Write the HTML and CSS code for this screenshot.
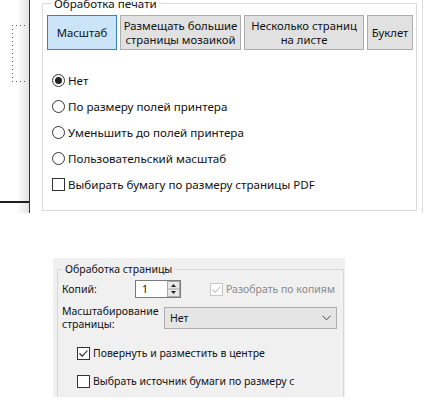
FILE: index.html
```html
<!DOCTYPE html>
<html>
<head>
<meta charset="utf-8">
<link rel="stylesheet" href="styles.css">
</head>
<body>
<div class="top">
  <div class="side">
    <div class="tree"></div>
    <div class="side-rule"></div>
  </div>
  <div class="main">
    <fieldset class="group">
      <legend class="group-title">Обработка печати</legend>
      <div class="tabs">
        <div class="tab tab-active w70">Масштаб</div>
        <div class="tab w121">Размещать большие<br>страницы мозаикой</div>
        <div class="tab w120">Несколько страниц<br>на листе</div>
        <div class="tab w46">Буклет</div>
      </div>
      <div class="options">
        <div class="opt"><span class="radio on"></span>Нет</div>
        <div class="opt"><span class="radio"></span>По размеру полей принтера</div>
        <div class="opt"><span class="radio"></span>Уменьшить до полей принтера</div>
        <div class="opt"><span class="radio"></span>Пользовательский масштаб</div>
        <div class="opt"><span class="check"></span>Выбирать бумагу по размеру страницы PDF</div>
      </div>
    </fieldset>
  </div>
</div>
<div class="bottom">
  <div class="panel">
    <fieldset class="pgroup">
      <legend class="pgroup-title">Обработка страницы</legend>
      <div class="row copies">
        <span class="lbl">Копий:</span>
        <div class="spin">
          <span class="spin-val">1</span>
          <svg class="spin-btns" width="13" height="16" viewBox="0 0 13 16"><rect x="0.5" y="0.5" width="12" height="15" fill="#e8e8e8" stroke="#a9a9a9"/><line x1="1" y1="8" x2="12" y2="8" stroke="#a9a9a9"/><path d="M4 6 L6.5 3 L9 6 Z" fill="#222"/><path d="M4 10 L6.5 13 L9 10 Z" fill="#222"/></svg>
        </div>
        <span class="collate"><span class="check dis"><svg width="11" height="11" viewBox="0 0 11 11"><path d="M1.5 5.5 L4.2 8.2 L9.5 2.5" fill="none" stroke="#c4c4c4" stroke-width="1.1"/></svg></span>Разобрать по копиям</span>
      </div>
      <div class="row scale">
        <span class="lbl two">Масштабирование<br>страницы:</span>
        <div class="select"><span>Нет</span><svg width="9" height="6" viewBox="0 0 9 6"><path d="M0.5 0.8 L4.5 4.8 L8.5 0.8" fill="none" stroke="#444" stroke-width="1"/></svg></div>
      </div>
      <div class="prow first"><span class="check"><svg width="11" height="11" viewBox="0 0 11 11"><path d="M1.5 5.5 L4.2 8.2 L9.5 2.5" fill="none" stroke="#222" stroke-width="1.1"/></svg></span>Повернуть и разместить в центре</div>
      <div class="prow"><span class="check"></span>Выбрать источник бумаги по размеру с</div>
    </fieldset>
  </div>
</div>
</body>
</html>
```

FILE: styles.css
```css
* { box-sizing: border-box; }
html, body {
  margin: 0;
  padding: 0;
  background: #ffffff;
  width: 425px;
  height: 408px;
  overflow: hidden;
  font-family: "Noto Sans", sans-serif;
  font-size: 10.5px;
  color: #111;
}
.top {
  display: flex;
  height: 213px;
  font-size: 11.6px;
}
.side {
  width: 30px;
  height: 213px;
  flex: none;
  background: linear-gradient(to right, #ffffff 0, #ffffff 17px, #e2e2e2 29px);
  border-right: 1px solid #333;
  padding-top: 25px;
  padding-left: 12px;
}
.tree {
  width: 16px;
  height: 57px;
  background:
    linear-gradient(to bottom, #555 1px, transparent 1px) left top / 1px 4px repeat-y,
    linear-gradient(to right, #555 1px, transparent 1px) left top / 4px 1px repeat-x,
    linear-gradient(to right, #555 1px, transparent 1px) left bottom / 4px 1px repeat-x;
}
.side-rule {
  margin: 119px 0 0 -12px;
  width: 29px;
  height: 2px;
  background: #1e1e1e;
}
.main {
  width: 393px;
  height: 213px;
  flex: none;
  border-right: 1px solid #dcdcdc;
  padding-left: 12px;
}
.group {
  margin: -3px 0 0 0;
  padding: 0 3px 0 4px;
  width: 375px;
  height: 214px;
  border: 1px solid #dcdcdc;
}
.group-title {
  padding: 0 2px;
  margin-left: 5px;
  line-height: 13px;
}
.tabs {
  display: flex;
  gap: 3px;
  margin-top: 5px;
  font-size: 11.3px;
}
.tab {
  height: 35px;
  border: 1px solid #adadad;
  background: #e1e1e1;
  display: flex;
  align-items: center;
  justify-content: center;
  text-align: center;
  line-height: 14px;
  white-space: nowrap;
}
.tab-active {
  background: #cce4f7;
  border-color: #3a7fbf;
}
.w70 { width: 70px; }
.w121 { width: 121px; }
.w120 { width: 120px; }
.w46 { width: 46px; }
.options {
  margin-top: 17px;
  padding-left: 5px;
}
.opt {
  height: 26px;
  display: flex;
  align-items: center;
  white-space: nowrap;
}
.radio {
  width: 13px;
  height: 13px;
  flex: none;
  border: 1px solid #333;
  border-radius: 50%;
  margin-right: 3px;
  display: flex;
  align-items: center;
  justify-content: center;
  background: #fff;
}
.radio.on::after {
  content: "";
  width: 7px;
  height: 7px;
  border-radius: 50%;
  background: #222;
}
.check {
  width: 13px;
  height: 13px;
  border: 1px solid #333;
  background: #fff;
  margin-right: 3px;
  display: inline-flex;
  align-items: center;
  justify-content: center;
  flex: none;
}
.check.dis { border-color: #c8c8c8; }
.bottom {
  padding: 45px 0 0 53px;
}
.panel {
  width: 292px;
  height: 139px;
  background: #f0f0f0;
  padding: 4px 0 0 4px;
  overflow: hidden;
}
.pgroup {
  margin: 0;
  padding: 0 0 0 4px;
  width: 287px;
  height: 160px;
  border: 1px solid #d6d6d6;
}
.pgroup-title {
  padding: 0 3px;
  margin-left: 0;
  line-height: 14px;
}
.row {
  display: flex;
  align-items: center;
  white-space: nowrap;
}
.copies {
  margin-top: 4px;
  height: 18px;
}
.lbl { width: 73px; flex: none; }
.spin {
  width: 46px;
  height: 18px;
  flex: none;
  background: #fff;
  border: 1px solid #7a7a7a;
  display: flex;
  align-items: center;
  justify-content: space-between;
  padding: 0 0 0 6px;
}
.collate {
  margin-left: 29px;
  display: flex;
  align-items: center;
  color: #8a8a8a;
}
.scale {
  margin-top: 9px;
  height: 22px;
}
.lbl.two { width: 102px; line-height: 13px; }
.select {
  width: 173px;
  height: 22px;
  flex: none;
  background: #e5e5e5;
  border: 1px solid #adadad;
  display: flex;
  align-items: center;
  justify-content: space-between;
  padding: 0 5px 0 5px;
}
.prow {
  display: flex;
  align-items: center;
  height: 20px;
  margin-top: 8px;
  padding-left: 15px;
  white-space: nowrap;
}
.prow.first { margin-top: 14px; }
```
